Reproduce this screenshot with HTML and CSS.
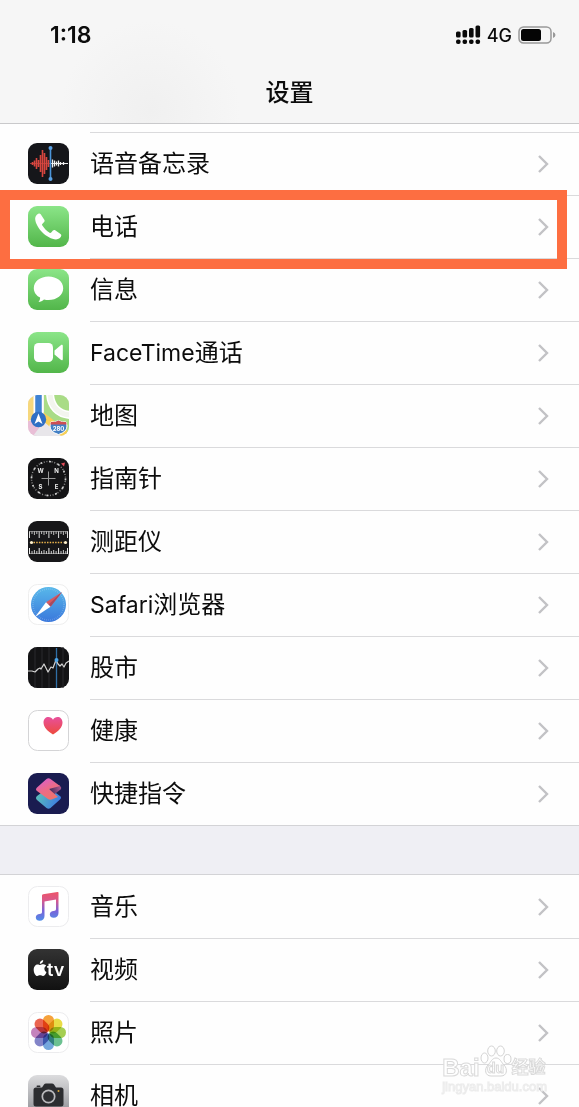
FILE: index.html
```html
<!DOCTYPE html>
<html lang="zh-CN">
<head>
  <meta charset="UTF-8">
  <meta name="viewport" content="width=device-width, initial-scale=1.0">
  <title>设置</title>
  <link rel="stylesheet" href="styles.css">
</head>
<body>
  <svg class="defs" width="0" height="0" aria-hidden="true">
    <defs>
      <linearGradient id="green" x1="0" y1="0" x2="0" y2="1"><stop offset="0" stop-color="#8be588"/><stop offset="1" stop-color="#52b64a"/></linearGradient>
      <linearGradient id="safari" x1="0" y1="0" x2="0" y2="1"><stop offset="0" stop-color="#58b8ea"/><stop offset="1" stop-color="#3a78dc"/></linearGradient>
      <linearGradient id="heart" x1="0" y1="0" x2="0" y2="1"><stop offset="0" stop-color="#e8509c"/><stop offset="1" stop-color="#ee4a3c"/></linearGradient>
      <linearGradient id="pink" x1="0.2" y1="0" x2="0.75" y2="1"><stop offset="0" stop-color="#d95fd0"/><stop offset="0.5" stop-color="#ec6b88"/><stop offset="1" stop-color="#ee7468"/></linearGradient>
      <linearGradient id="fold" x1="1" y1="0.3" x2="0" y2="0.5"><stop offset="0" stop-color="#b2578e"/><stop offset="1" stop-color="#3a2a58"/></linearGradient>
      <linearGradient id="teal" x1="0" y1="0" x2="1" y2="0.4"><stop offset="0" stop-color="#5fc8b4"/><stop offset="1" stop-color="#3f7fe0"/></linearGradient>
      <linearGradient id="note" x1="0" y1="0" x2="0" y2="1"><stop offset="0" stop-color="#ee5468"/><stop offset="0.3" stop-color="#d8598c"/><stop offset="0.65" stop-color="#7a62d8"/><stop offset="1" stop-color="#4f8fe8"/></linearGradient>
      <linearGradient id="dark" x1="0" y1="0" x2="0" y2="1"><stop offset="0" stop-color="#333"/><stop offset="1" stop-color="#111"/></linearGradient>
      <linearGradient id="silver" x1="0" y1="0" x2="0" y2="1"><stop offset="0" stop-color="#dcdcde"/><stop offset="1" stop-color="#8d8e93"/></linearGradient>
      <clipPath id="tile"><rect width="41" height="41" rx="9"/></clipPath>
      <symbol id="chevron" viewBox="0 0 12 20"><path d="M2 2l8 8-8 8" fill="none" stroke="#c2c2c5" stroke-width="2.4"/></symbol>
    </defs>
  </svg>

  <div class="phone">
    <header class="header">
      <div class="status">
        <span class="time">1:18</span>
        <div class="status-right">
          <svg width="25" height="20" viewBox="0 0 25 20" aria-hidden="true">
            <g fill="#0a0a0a">
              <rect x="0" y="6.500" width="4.600" height="6" rx="1.500"/><rect x="6.500" y="5" width="4.600" height="7.500" rx="1.500"/><rect x="13" y="3" width="4.600" height="9.500" rx="1.500"/><rect x="19.500" y="0.500" width="4.600" height="12" rx="1.500"/>
              <rect x="0" y="14.500" width="4.600" height="4.600" rx="2"/><rect x="6.500" y="14.500" width="4.600" height="4.600" rx="2"/><rect x="13" y="14.500" width="4.600" height="4.600" rx="2"/><rect x="19.500" y="14.500" width="4.600" height="4.600" rx="2"/>
            </g>
          </svg>
          <span class="network">4G</span>
          <svg width="38" height="18" viewBox="0 0 38 18" aria-hidden="true">
            <rect x="1" y="1" width="32" height="16" rx="4.500" fill="none" stroke="#999" stroke-width="1.500"/>
            <rect x="3" y="3" width="20" height="12" rx="2.500" fill="#050505"/>
            <path d="M35 6q2.500 1 2.500 3t-2.500 3z" fill="#999"/>
          </svg>
        </div>
      </div>
      <h1 class="title">设置</h1>
    </header>

    <main>
      <ul class="list list-first">
        <li class="row"><a href="#voice">
          <svg class="icon" viewBox="0 0 41 41" aria-hidden="true">
            <rect width="41" height="41" rx="9" fill="#15161a"/>
            <path d="M2 20.500h38" stroke="#9c3a38" stroke-width="1"/>
            <path d="M4.500 19v3M6.500 17.500v6M8.500 15v11M10.500 17v7M12.500 12v17M14.500 7v27M16.500 10v21M18.500 14v13M20.500 17v7" stroke="#d9463f" stroke-width="1.600"/>
            <path d="M22 20.500h18" stroke="#eee" stroke-width="1"/>
            <path d="M24.500 16.500v8M26.500 17.500v6M28.500 18.500v4M30.500 17.500v6M32.500 19v3M35.500 19v3" stroke="#f2f2f2" stroke-width="1.300"/>
            <path d="M22.500 5v31" stroke="#4b95da" stroke-width="1.600"/>
            <circle cx="22.500" cy="5" r="2" fill="#5ba3e6"/><circle cx="22.500" cy="36" r="2" fill="#5ba3e6"/>
          </svg>
          <span class="label">语音备忘录</span><svg class="chevron"><use href="#chevron"/></svg>
        </a></li>
        <li class="row highlighted"><a href="#phone">
          <svg class="icon" viewBox="0 0 41 41" aria-hidden="true">
            <rect width="41" height="41" rx="9" fill="url(#green)"/>
            <path d="M11 7.500c-2 .3-4 3-3.800 5.700C8 22 19 33 28 33.400c2.700 0 5-1.700 5.300-3.800.1-.8-.2-1.300-.8-1.700l-5.300-3.600c-.9-.6-1.700-.4-2.300.3l-1.700 2c-.5.500-1 .6-1.600.2-2.900-1.800-5.700-4.700-7.400-7.500-.4-.6-.2-1.100.3-1.600l1.600-1.700c.6-.7.7-1.500.2-2.300l-3.600-5.400c-.4-.6-1-.9-1.700-.8z" fill="#fff"/>
          </svg>
          <span class="label">电话</span><svg class="chevron"><use href="#chevron"/></svg>
        </a></li>
        <li class="row"><a href="#messages">
          <svg class="icon" viewBox="0 0 41 41" aria-hidden="true">
            <rect width="41" height="41" rx="9" fill="url(#green)"/>
            <path d="M20.500 7.500c8.300 0 14.700 5 14.700 11.700S28.800 31 20.500 31c-1.600 0-3.100-.2-4.500-.6-1.500 1.500-3.400 2.400-5.500 2.600 1.100-1.100 1.700-2.700 1.600-4.400-3.800-2-6.300-5.500-6.300-9.400C5.800 12.500 12.200 7.500 20.500 7.500z" fill="#fff"/>
          </svg>
          <span class="label">信息</span><svg class="chevron"><use href="#chevron"/></svg>
        </a></li>
        <li class="row"><a href="#facetime">
          <svg class="icon" viewBox="0 0 41 41" aria-hidden="true">
            <rect width="41" height="41" rx="9" fill="url(#green)"/>
            <rect x="6" y="11" width="19" height="19" rx="4.500" fill="#fff"/>
            <path d="M26.500 18.500l6.300-5.300c1-.8 2-.5 2 .8v13c0 1.300-1 1.600-2 .8l-6.300-5.300z" fill="#fff"/>
          </svg>
          <span class="label"><span class="latin">FaceTime</span>通话</span><svg class="chevron"><use href="#chevron"/></svg>
        </a></li>
        <li class="row"><a href="#maps">
          <svg class="icon" viewBox="0 0 41 41" aria-hidden="true">
            <g clip-path="url(#tile)">
              <rect width="41" height="41" fill="#ece9e3"/>
              <path d="M0 5l7-5v22L0 26z" fill="#f6d77c"/>
              <path d="M0 26l16-2 12 17H0z" fill="#e9bed6"/>
              <path d="M5 41l12-16 14 16z" fill="#e8e6ea"/>
              <path d="M16 0h25v41L16 18z" fill="#a9dc86"/>
              <path d="M15 17l26 20v4h-8L15 26z" fill="#f7cf58"/>
              <path d="M22-3c0 14 8 23 22 23" fill="none" stroke="#fff" stroke-width="8"/>
              <path d="M22-3c0 14 8 23 22 23" fill="none" stroke="#f3f5ee" stroke-width="5"/>
              <path d="M10.500 0v26" stroke="#fff" stroke-width="10"/>
              <path d="M10.500 0v26" stroke="#3f82d3" stroke-width="6.500"/>
            </g>
            <circle cx="10.500" cy="24.500" r="7.700" fill="#2f6fc4"/>
            <path d="M10.500 18.500l4 10.500-4-2.500-4 2.500z" fill="#fff"/>
            <path d="M23 27q4 .5 7.500-1.500Q34 27.500 38 27l1 4q0 6-8.500 8.500Q22 37 22 31z" fill="#4380c5" stroke="#fff" stroke-width="1"/>
            <path d="M23 27q4 .5 7.500-1.500Q34 27.500 38 27l.7 2.500H22.300z" fill="#cf4e52"/>
            <text x="30.500" y="36" class="map-number">280</text>
          </svg>
          <span class="label">地图</span><svg class="chevron"><use href="#chevron"/></svg>
        </a></li>
        <li class="row"><a href="#compass">
          <svg class="icon" viewBox="0 0 41 41" aria-hidden="true">
            <rect width="41" height="41" rx="9" fill="#141416"/>
            <circle cx="20.500" cy="20.500" r="17" fill="none" stroke="#888" stroke-width="1.500" stroke-dasharray="1 1.670"/>
            <circle cx="20.500" cy="20.500" r="17" fill="none" stroke="#ccc" stroke-width="1.600" stroke-dasharray="2 6.900"/>
            <path d="M20.500 13.500v14M13.500 20.500h14" stroke="#999" stroke-width="1"/>
            <path d="M33 5.500l4-1-1 4z" fill="#e34b58"/>
            <g class="compass-letters"><text x="12.500" y="15">W</text><text x="28.500" y="15">N</text><text x="12.500" y="31">S</text><text x="28.500" y="31">E</text></g>
          </svg>
          <span class="label">指南针</span><svg class="chevron"><use href="#chevron"/></svg>
        </a></li>
        <li class="row"><a href="#measure">
          <svg class="icon" viewBox="0 0 41 41" aria-hidden="true">
            <rect width="41" height="41" rx="9" fill="#171719"/>
            <path d="M1.500 10v7M11.200 10v7M20.900 10v7M30.600 10v7M39.500 10v7" stroke="#ddd" stroke-width="1"/>
            <path d="M4 10v3M6.400 10v4M8.800 10v3M13.600 10v3M16 10v4M18.400 10v3M23.300 10v3M25.700 10v4M28.100 10v3M33 10v3M35.400 10v4M37.800 10v3" stroke="#bbb" stroke-width="1"/>
            <path d="M1 10.500h39M1 32.500h39" stroke="#aaa" stroke-width=".7"/>
            <path d="M5.500 21.500h30" stroke="#e9b34c" stroke-width="1.600" stroke-dasharray="1.500 1.200"/>
            <circle cx="3.500" cy="21.500" r="1.600" fill="#fff2ce"/><circle cx="37.500" cy="21.500" r="1.600" fill="#fff2ce"/>
            <path d="M1.500 27v6M11.200 27v6M20.900 27v6M30.600 27v6M39.500 27v6" stroke="#eee" stroke-width="1"/>
            <path d="M4 30v3M6.400 29v4M8.800 30v3M13.600 30v3M16 29v4M18.400 30v3M23.300 30v3M25.700 29v4M28.100 30v3M33 30v3M35.400 29v4M37.800 30v3" stroke="#ccc" stroke-width="1"/>
          </svg>
          <span class="label">测距仪</span><svg class="chevron"><use href="#chevron"/></svg>
        </a></li>
        <li class="row"><a href="#safari">
          <svg class="icon" viewBox="0 0 41 41" aria-hidden="true">
            <rect x=".5" y=".5" width="40" height="40" rx="9" fill="#fff" stroke="#eee"/>
            <circle cx="20.500" cy="20.500" r="17.500" fill="url(#safari)"/>
            <circle cx="20.500" cy="20.500" r="15.500" fill="none" stroke="#fff" stroke-opacity=".3" stroke-width="1.500" stroke-dasharray=".6 1.400"/>
            <path d="M34 8L18 18.300l4.500 4.500z" fill="#d75a62"/>
            <path d="M34 8L20.500 20.500l2 2.300z" fill="#a94a60"/>
            <path d="M7 33l11-14.700 4.500 4.500z" fill="#fff"/>
          </svg>
          <span class="label"><span class="latin">Safari</span>浏览器</span><svg class="chevron"><use href="#chevron"/></svg>
        </a></li>
        <li class="row"><a href="#stocks">
          <svg class="icon" viewBox="0 0 41 41" aria-hidden="true">
            <rect width="41" height="41" rx="9" fill="#131315"/>
            <path d="M7 0v41M14 0v41M21 0v41M35 0v41" stroke="#2b2b2e" stroke-width="1"/>
            <path d="M28.500 1v40" stroke="#2f6fa6" stroke-width="1.300"/>
            <path d="M0 24h4l3 1 3-3 2-1 1 1 3-5 4 8 3-5 2 1 3-8 2 4 2 2 2-2 2 3 2-4 3-2" fill="none" stroke="#d4d4d4" stroke-width="1.200" stroke-linejoin="round"/>
            <circle cx="28.500" cy="13" r="2" fill="#4ca5e8"/>
          </svg>
          <span class="label">股市</span><svg class="chevron"><use href="#chevron"/></svg>
        </a></li>
        <li class="row"><a href="#health">
          <svg class="icon" viewBox="0 0 41 41" aria-hidden="true">
            <rect x=".5" y=".5" width="40" height="40" rx="9" fill="#fff" stroke="#d4d4d6"/>
            <path d="M25 24.500C20 21.500 15.500 17.500 15.500 12.500c0-3.500 2.300-5.500 4.900-5.500 2 0 3.600 1 4.600 2.800C26 8 27.600 7 29.600 7c2.600 0 4.900 2 4.900 5.500 0 5-4.500 9-9.500 12z" fill="url(#heart)"/>
          </svg>
          <span class="label">健康</span><svg class="chevron"><use href="#chevron"/></svg>
        </a></li>
        <li class="row"><a href="#shortcuts">
          <svg class="icon" viewBox="0 0 41 41" aria-hidden="true">
            <rect width="41" height="41" rx="9" fill="#1a1c50"/>
            <path d="M18.500 16q2-1.500 4 0L32 23q2 1.500 0 3.500L22.500 35q-2 1.500-4 0L9 27q-2-2 0-4z" fill="url(#teal)"/>
            <path d="M21 14l10-2 1.500 1.500q1.500 1.500 0 3L23 24z" fill="url(#fold)"/>
            <path d="M18.500 6q2-1.500 4 0L32 13l-11 3 9 8-6.500 2.500q-2 .5-3.500-.5L9 18q-2-1.700 0-3.500z" fill="url(#pink)"/>
          </svg>
          <span class="label">快捷指令</span><svg class="chevron"><use href="#chevron"/></svg>
        </a></li>
      </ul>

      <div class="gap"></div>

      <ul class="list list-second">
        <li class="row"><a href="#music">
          <svg class="icon" viewBox="0 0 41 41" aria-hidden="true">
            <rect x=".5" y=".5" width="40" height="40" rx="9" fill="#fff" stroke="#ececee"/>
            <path d="M14 9.500q0-1 1-1.200L29.500 6q1-.2 1 .8V27c0 3-2 4.800-4.800 4.800-2.300 0-3.900-1.300-3.900-3.300 0-2.300 1.700-3.300 3.700-3.600 1.800-.3 2.500-.6 2.500-2V13.500L16.500 15.500V30c0 3-2 4.800-4.800 4.800-2.300 0-3.900-1.300-3.900-3.300 0-2.300 1.700-3.300 3.700-3.600 1.800-.3 2.500-.6 2.500-2z" fill="url(#note)"/>
          </svg>
          <span class="label">音乐</span><svg class="chevron"><use href="#chevron"/></svg>
        </a></li>
        <li class="row"><a href="#tv">
          <svg class="icon" viewBox="0 0 41 41" aria-hidden="true">
            <rect width="41" height="41" rx="9" fill="url(#dark)"/>
            <path d="M12 16c1.300 0 2-.9 3.500-.7 1.200.1 2 .6 2.600 1.400-2.400 1.500-2.200 5 .4 6.200-.6 1.900-2 4.100-3.600 4.100-1.100 0-1.500-.7-2.800-.7s-1.800.7-2.800.7C7.400 27 5.700 23.500 5.700 20.700c0-3.300 2-5.300 4-5.300 1.100 0 1.700.6 2.300.6zM11.800 15c-.1-2 1.400-3.700 3.400-4 .2 2-1.400 3.800-3.400 4z" fill="#fff"/>
            <text x="19" y="27" class="tv-text">tv</text>
          </svg>
          <span class="label">视频</span><svg class="chevron"><use href="#chevron"/></svg>
        </a></li>
        <li class="row"><a href="#photos">
          <svg class="icon" viewBox="0 0 41 41" aria-hidden="true">
            <rect x=".5" y=".5" width="40" height="40" rx="9" fill="#fff" stroke="#ececee"/>
            <g class="petals">
              <rect x="15" y="3" width="11" height="16.500" rx="5.500" fill="#f6a23c"/>
              <rect x="15" y="3" width="11" height="16.500" rx="5.500" fill="#e9dc45" transform="rotate(45 20.500 20.500)"/>
              <rect x="15" y="3" width="11" height="16.500" rx="5.500" fill="#a5cf52" transform="rotate(90 20.500 20.500)"/>
              <rect x="15" y="3" width="11" height="16.500" rx="5.500" fill="#6cc191" transform="rotate(135 20.500 20.500)"/>
              <rect x="15" y="3" width="11" height="16.500" rx="5.500" fill="#74a7dd" transform="rotate(180 20.500 20.500)"/>
              <rect x="15" y="3" width="11" height="16.500" rx="5.500" fill="#8384c8" transform="rotate(225 20.500 20.500)"/>
              <rect x="15" y="3" width="11" height="16.500" rx="5.500" fill="#c583bd" transform="rotate(270 20.500 20.500)"/>
              <rect x="15" y="3" width="11" height="16.500" rx="5.500" fill="#ea6450" transform="rotate(315 20.500 20.500)"/>
            </g>
          </svg>
          <span class="label">照片</span><svg class="chevron"><use href="#chevron"/></svg>
        </a></li>
        <li class="row"><a href="#camera">
          <svg class="icon" viewBox="0 0 41 41" aria-hidden="true">
            <rect width="41" height="41" rx="9" fill="url(#silver)"/>
            <path d="M8 12.500h6l2-3q.7-1 2-1h6q1.300 0 2 1l2 3h5q2.500 0 2.500 2.500v14q0 2.500-2.500 2.500H8q-2.500 0-2.500-2.500V15q0-2.500 2.500-2.500z" fill="#2c2d30"/>
            <rect x="8.500" y="10.500" width="4" height="1.500" rx=".7" fill="#2c2d30"/>
            <circle cx="20.500" cy="21.500" r="6.200" fill="#2c2d30" stroke="#b9b9bc" stroke-width="1.700"/>
            <circle cx="30.500" cy="16" r="1" fill="#d9a63c"/>
          </svg>
          <span class="label">相机</span><svg class="chevron"><use href="#chevron"/></svg>
        </a></li>
      </ul>
    </main>

    <div class="watermark">
      <div class="brand">
        <span>Bai</span>
        <span class="paw">
          <svg viewBox="0 0 32 32" aria-hidden="true">
            <g fill="#fff" stroke="#d4d4d4">
              <ellipse cx="4.500" cy="13" rx="3.500" ry="5"/><ellipse cx="11.500" cy="6" rx="3.800" ry="5"/><ellipse cx="20.500" cy="6" rx="3.800" ry="5"/><ellipse cx="27.500" cy="14" rx="3.500" ry="4.500"/>
              <path d="M16 13c4 0 5 4 8 7 4 4 3 11-3 11H11c-6 0-7-7-3-11 3-3 4-7 8-7z"/>
            </g>
          </svg>
          <span class="du">du</span>
        </span>
        <span class="jingyan">经验</span>
      </div>
      <div class="site">jingyan.baidu.com</div>
    </div>
  </div>
</body>
</html>
```
FILE: styles.css
```css
* {
  box-sizing: border-box;
}

body {
  margin: 0;
  background: #fefefe;
  color: #0c0c0c;
  font-family: Inter, "Noto Sans CJK SC", sans-serif;
}

.defs {
  position: absolute;
}

.phone {
  position: relative;
  height: 100vh;
  overflow: hidden;
}

.header {
  height: 124px;
  padding-top: 20px;
  background: radial-gradient(circle at 26% 90%, #f0f0f0, #f6f6f6 90px);
  border-bottom: 1px solid #c9c9cb;
}

.status {
  display: flex;
  align-items: center;
  justify-content: space-between;
  height: 30px;
  padding: 0 23px 0 50px;
}

.time {
  font-size: 23px;
  font-weight: 600;
}

.status-right {
  display: flex;
  align-items: center;
  gap: 6px;
}

.network {
  font-size: 18px;
  font-weight: 500;
}

.title {
  margin: 25px 0 0;
  font-size: 24px;
  line-height: 36px;
  font-weight: 500;
  text-align: center;
}

.list {
  margin: 0;
  padding: 0;
  list-style: none;
}

.list-first {
  padding-top: 8px;
}

.gap {
  height: 50px;
  background: #efeff4;
  border-top: 1px solid #d3d3d6;
  border-bottom: 1px solid #d3d3d6;
}

.row {
  position: relative;
}

.row a {
  display: flex;
  align-items: center;
  height: 63px;
  padding: 0 30px 0 28px;
  color: inherit;
  text-decoration: none;
}

/* separator starts at the label, not under the icon */
.row::before {
  content: "";
  position: absolute;
  top: 0;
  left: 90px;
  right: 0;
  height: 1px;
  background: #dadadc;
}

.list-second .row:first-child::before {
  display: none;
}

.icon {
  flex: none;
  width: 41px;
  height: 41px;
}

.label {
  flex: 1;
  margin-left: 21px;
  font-size: 24px;
  line-height: 24px;
}

.latin {
  font-size: 23px;
}

.chevron {
  flex: none;
  width: 12px;
  height: 20px;
}

.highlighted::after {
  content: "";
  position: absolute;
  z-index: 1;
  top: -5px;
  right: 12px;
  bottom: -11px;
  left: 0;
  border: 10px solid #fd6e41;
  pointer-events: none;
}

.map-number {
  font-size: 6px;
  font-weight: 700;
  fill: #fff;
  text-anchor: middle;
}

.compass-letters {
  font-size: 6px;
  font-weight: 700;
  fill: #eee;
  text-anchor: middle;
}

.tv-text {
  font-size: 18px;
  font-weight: 600;
  fill: #fff;
}

.petals rect {
  mix-blend-mode: multiply;
}

.watermark {
  position: absolute;
  right: 32px;
  bottom: 12px;
  color: #fff;
  font-family: "Liberation Sans", "Noto Sans CJK SC", sans-serif;
  -webkit-text-stroke: 1px #dadada;
  pointer-events: none;
}

.brand {
  display: flex;
  align-items: flex-end;
  font-size: 24px;
  line-height: 22px;
  font-weight: 700;
}

.paw {
  position: relative;
  width: 32px;
  height: 34px;
}

.paw svg {
  width: 32px;
  height: 32px;
}

.du {
  position: absolute;
  left: 0;
  right: 0;
  bottom: 0;
  font-size: 14px;
  text-align: center;
}

.jingyan {
  font-size: 17px;
}

.site {
  font-size: 13px;
  line-height: 16px;
  -webkit-text-stroke: 1px #ececec;
}
```
